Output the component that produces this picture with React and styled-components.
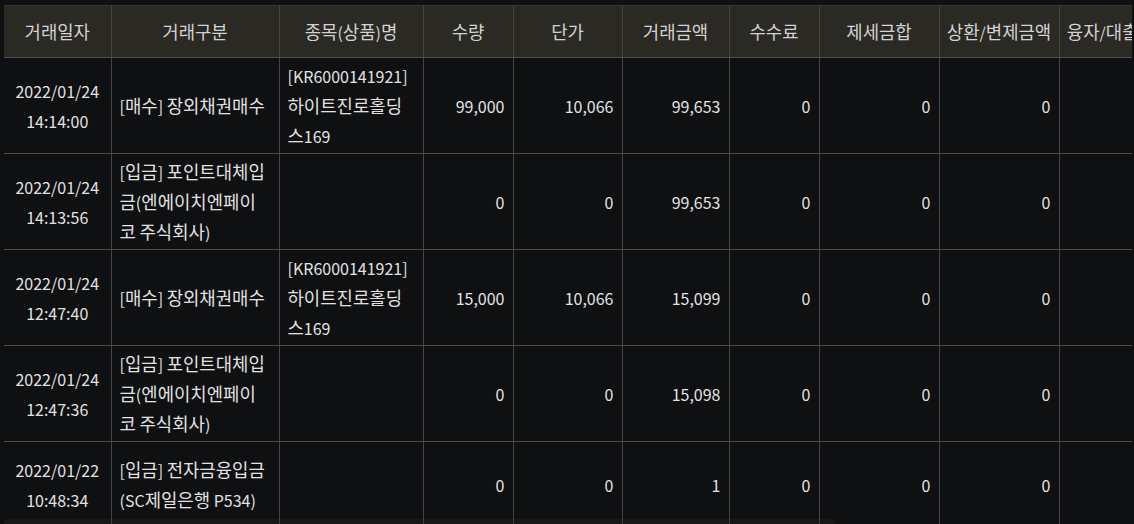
import React from 'react'
import styled, { createGlobalStyle } from 'styled-components'

const GlobalStyle = createGlobalStyle`
    html, body {
        margin: 0;
        padding: 0;
        background: #0f1012;
    }

    body {
        padding: 5px 0 0 4px;
        font-family: "Noto Sans CJK KR", "Noto Sans", sans-serif;
        color: #dedede;
        overflow: hidden;
    }
`

const columns = [
    { title: '거래일자', width: 107 },
    { title: '거래구분', width: 168 },
    { title: '종목(상품)명', width: 144 },
    { title: '수량', width: 90 },
    { title: '단가', width: 109 },
    { title: '거래금액', width: 107 },
    { title: '수수료', width: 90 },
    { title: '제세금합', width: 120 },
    { title: '상환/변제금액', width: 120 },
    { title: '융자/대출금액', width: 120 },
    { title: '연체료', width: 120 },
    { title: '잔고수량', width: 120 },
    { title: '예수금', width: 115 },
]

const rows = [
    {
        date: '2022/01/24', time: '14:14:00',
        kind: '[매수] 장외채권매수',
        item: '[KR6000141921] 하이트진로홀딩스169',
        nums: ['99,000', '10,066', '99,653', '0', '0', '0'],
    },
    {
        date: '2022/01/24', time: '14:13:56',
        kind: '[입금] 포인트대체입금(엔에이치엔페이코 주식회사)',
        item: '',
        nums: ['0', '0', '99,653', '0', '0', '0'],
    },
    {
        date: '2022/01/24', time: '12:47:40',
        kind: '[매수] 장외채권매수',
        item: '[KR6000141921] 하이트진로홀딩스169',
        nums: ['15,000', '10,066', '15,099', '0', '0', '0'],
    },
    {
        date: '2022/01/24', time: '12:47:36',
        kind: '[입금] 포인트대체입금(엔에이치엔페이코 주식회사)',
        item: '',
        nums: ['0', '0', '15,098', '0', '0', '0'],
    },
    {
        date: '2022/01/22', time: '10:48:34',
        kind: '[입금] 전자금융입금 (SC제일은행 P534)',
        item: '',
        nums: ['0', '0', '1', '0', '0', '0'],
    },
]

// hangul in the original font runs wider than the latin part, so size it apart
const Text = ({ children }) =>
    String(children)
        .split(/([\uAC00-\uD7A3]+)/)
        .map((part, i) => (i % 2 ? <Hangul key={i}>{part}</Hangul> : part))

const App = () => {
    return (
        <>
            <GlobalStyle />
            <Frame>
                <Table>
                    <colgroup>
                        {columns.map((c) => (
                            <col key={c.title} style={{ width: c.width }} />
                        ))}
                    </colgroup>
                    <thead>
                        <tr>
                            {columns.map((c) => (
                                <HeadCell key={c.title}>
                                    <Text>{c.title}</Text>
                                </HeadCell>
                            ))}
                        </tr>
                    </thead>
                    <tbody>
                        {rows.map((r, i) => (
                            <tr key={i}>
                                <Cell $align="center">
                                    <Line>{r.date}</Line>
                                    <Line>{r.time}</Line>
                                </Cell>
                                <Cell><Text>{r.kind}</Text></Cell>
                                <Cell><Text>{r.item}</Text></Cell>
                                {r.nums.map((n, j) => (
                                    <Cell key={j} $align="right">{n}</Cell>
                                ))}
                                <Cell />
                                <Cell />
                                <Cell />
                                <Cell />
                            </tr>
                        ))}
                    </tbody>
                </Table>
                <ScrollThumb />
            </Frame>
        </>
    )
}

export default App

const Frame = styled.div`
    position: relative;
    width: 1128px;
    overflow: hidden;
`

const Table = styled.table`
    width: 1530px;
    table-layout: fixed;
    border-collapse: collapse;
    font-family: "Noto Sans CJK KR", "Noto Sans", sans-serif;
    font-size: 16px;
    line-height: 30px;
`

const Hangul = styled.span`
    font-size: 17.8px;
    line-height: 18px;
`

const HeadCell = styled.th`
    height: 51px;
    padding: 0 2px;
    background: #2b2924;
    color: #d2d2d2;
    font-weight: 400;
    text-align: center;
    white-space: nowrap;
    overflow: hidden;
    border-top: 1px solid #34332f;
    border-right: 1px solid #45443f;
    border-bottom: 1px solid #4e4e4e;
`

const Cell = styled.td`
    height: 80px;
    padding: 3px 8px 2px 8px;
    vertical-align: middle;
    text-align: ${(p) => p.$align || 'left'};
    border-right: 1px solid #444;
    border-bottom: 1px solid #4a4a4a;
    color: #e2e2e2;
`

const Line = styled.div`
    white-space: nowrap;
`

const ScrollThumb = styled.div`
    position: absolute;
    left: 0;
    bottom: 2px;
    width: 831px;
    height: 7px;
    border-radius: 4px;
    background: rgba(60, 55, 45, 0.22);
    pointer-events: none;
`
